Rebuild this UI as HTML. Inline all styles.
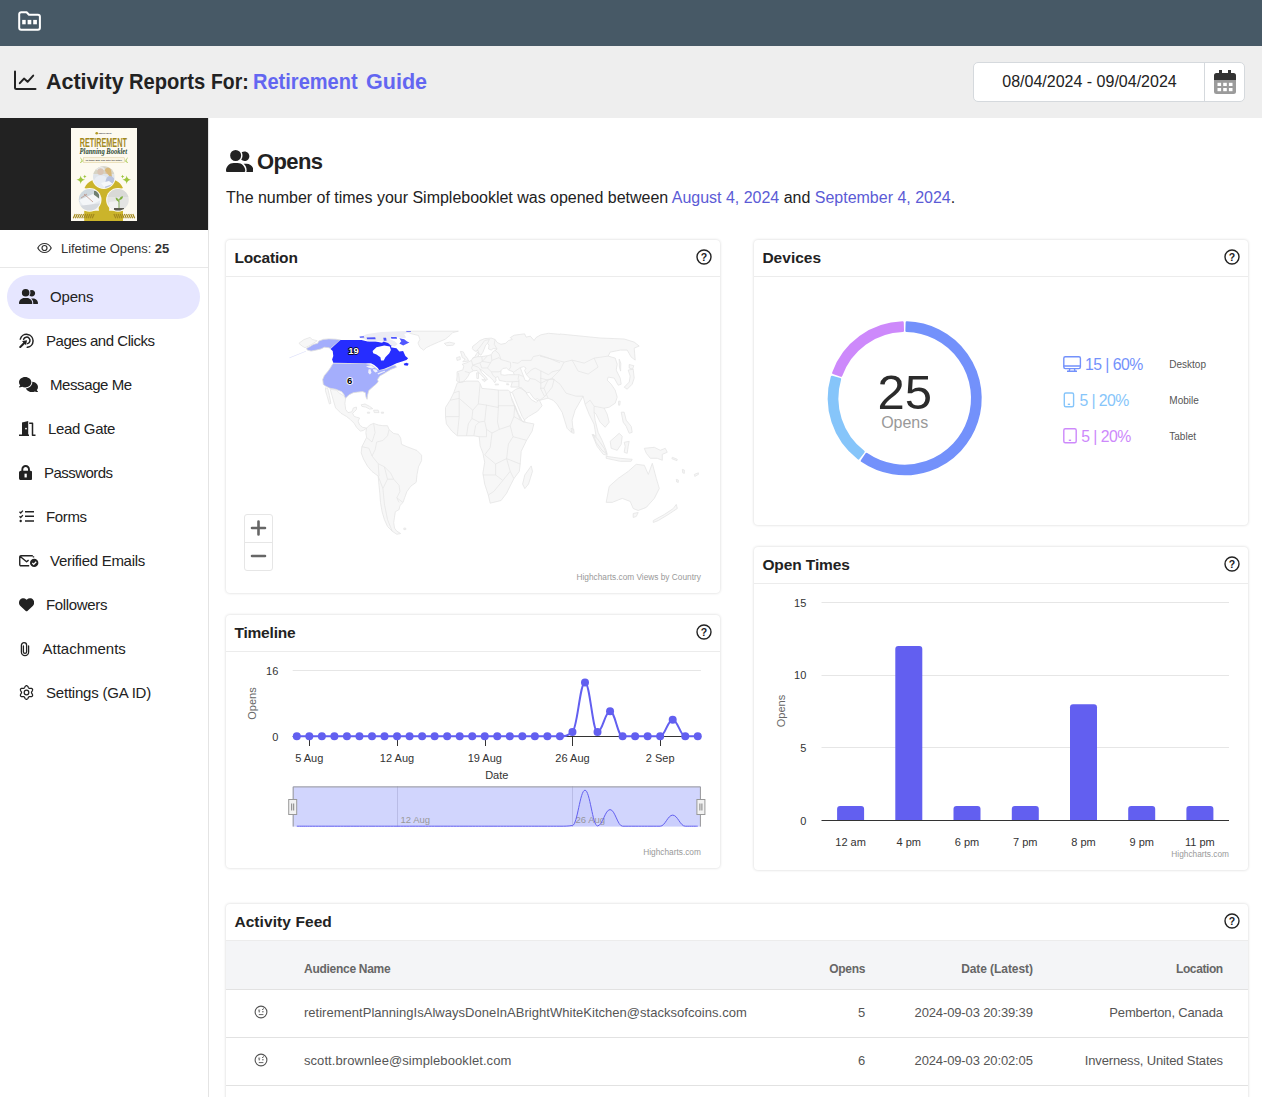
<!DOCTYPE html>
<html><head><meta charset="utf-8"><title>Activity Reports</title>
<style>
*{box-sizing:border-box;margin:0;padding:0}
html,body{width:1262px;height:1097px;overflow:hidden;background:#fff;font-family:"Liberation Sans",sans-serif;color:#222}
.abs{position:absolute}
#top{position:absolute;left:0;top:0;width:1262px;height:46px;background:#475966}
#bar{position:absolute;left:0;top:46px;width:1262px;height:72px;background:#eeeeee}
#title{position:absolute;left:46px;top:68px;font-size:22.500px;font-weight:bold;line-height:28px;letter-spacing:-0.97px;color:#222;white-space:nowrap}
#title i{position:absolute;top:0;font-style:normal;letter-spacing:0}#title i.c{color:#6366f1}
#date{position:absolute;left:973px;top:62px;width:272px;height:40px;border:1px solid #d5d9dd;border-radius:5px;background:#fff}
#date .txt{position:absolute;left:0;top:0;width:231px;height:38px;line-height:38px;text-align:center;font-size:16px;color:#222}
#date .sep{position:absolute;left:230px;top:0;width:1px;height:38px;background:#d5d9dd}
#side{position:absolute;left:0;top:118px;width:209px;height:979px;border-right:1px solid #e4e4e4;background:#fff}
#thumb{position:absolute;left:0;top:0;width:208px;height:112px;background:#222}
#life{position:absolute;left:0;top:112px;width:208px;height:38px;border-bottom:1px solid #e8e8e8;font-size:13px;line-height:38px;letter-spacing:-0.05px;color:#333}
.nav{position:absolute;left:0;width:208px;height:44px;font-size:15px;line-height:44px;color:#222;letter-spacing:-0.3px;white-space:nowrap}
.nav.act{left:7px;width:193px;border-radius:22px;background:#e6e6ff}
.nav svg{position:absolute}
.nav span{position:absolute;top:0}
h1{position:absolute;left:257px;top:148px;font-size:22px;line-height:28px;font-weight:bold;letter-spacing:-0.6px;color:#222}
#desc{position:absolute;left:226px;top:186px;font-size:16px;line-height:24px;color:#222;white-space:nowrap;letter-spacing:-0.012px}
#desc b{font-weight:normal;color:#5b5bd6}
.card{position:absolute;background:#fff;border-radius:4px;box-shadow:0 0 3px rgba(0,0,0,.18)}
.card .hd{position:absolute;left:0;top:0;right:0;height:37px;border-bottom:1px solid #ececec;font-size:15.500px;font-weight:bold;line-height:36px;padding-left:8.400px;color:#222;letter-spacing:-0.2px}
.card .q{position:absolute;right:8.500px;top:8.800px;width:16px;height:16px}

#c-feed .th{position:absolute;left:0;top:37px;width:1022px;height:49px;background:#f4f5f7;border-bottom:1px solid #e2e2e2}
#c-feed .row{position:absolute;left:0;width:1022px;height:48px;border-bottom:1px solid #e2e2e2}
#c-feed .t{position:absolute;white-space:nowrap;font-size:13px;line-height:16px;color:#555}
#c-feed .h{position:absolute;white-space:nowrap;font-size:12px;line-height:16px;color:#666;font-weight:bold}
#c-feed .r{text-align:right}
</style></head><body>
<div id="top"></div>
<div id="bar"></div>
<div id="title"><i id="w1" style="left:0.2px;transform:scaleX(0.9545);transform-origin:0 0">Activity</i><i id="w2" style="left:82.9px;transform:scaleX(0.8953);transform-origin:0 0">Reports</i><i id="w3" style="left:164.7px;transform:scaleX(0.8607);transform-origin:0 0">For:</i><i id="w4" class="c" style="left:207.2px;transform:scaleX(0.8902);transform-origin:0 0">Retirement</i><i id="w5" class="c" style="left:319.7px;transform:scaleX(0.9577);transform-origin:0 0">Guide</i></div>
<div id="date"><div class="txt">08/04/2024 - 09/04/2024</div><div class="sep"></div></div>

<svg class="abs" style="left:18px;top:11px" width="24" height="20" viewBox="0 0 24 20"><path d="M3.200 1.200h5.400l2.400 2.600h8.900a2 2 0 0 1 2 2v10.900a2 2 0 0 1-2 2H3.200a2 2 0 0 1-2-2V3.200a2 2 0 0 1 2-2z" fill="none" stroke="#fff" stroke-width="2" stroke-linejoin="round"/><rect x="4.200" y="8.900" width="3.500" height="4.400" fill="#fff"/><rect x="9.600" y="8.900" width="3.700" height="4.400" fill="#fff"/><rect x="15.200" y="8.900" width="3.700" height="4.400" fill="#fff"/></svg>
<svg class="abs" style="left:13px;top:70px" width="24" height="21" viewBox="0 0 24 21"><path d="M2 1.500V17.500a1.500 1.500 0 0 0 1.500 1.500H22.500" fill="none" stroke="#222" stroke-width="2" stroke-linecap="round"/><path d="M6.800 13.200l4.200-4.600 3.600 3.200 5.600-6.200" fill="none" stroke="#222" stroke-width="2" stroke-linecap="round" stroke-linejoin="round"/></svg>
<svg class="abs" style="left:1213.500px;top:70px" width="22" height="24" viewBox="0 0 22 24"><path d="M5 0h3v3h6V0h3v3h2.500a2.500 2.500 0 0 1 2.500 2.500V10.500H0V5.500A2.500 2.500 0 0 1 2.500 3H5z" fill="#333"/><path d="M0 10.500h22v11a2.500 2.500 0 0 1-2.500 2.500h-17A2.500 2.500 0 0 1 0 21.500z" fill="#9b9b9b"/><g fill="#fff"><rect x="3.500" y="12.800" width="3.600" height="3.200"/><rect x="9.200" y="12.800" width="3.600" height="3.200"/><rect x="14.900" y="12.800" width="3.600" height="3.200"/><rect x="3.500" y="18" width="3.600" height="3.200"/><rect x="9.200" y="18" width="3.600" height="3.200"/><rect x="14.900" y="18" width="3.600" height="3.200"/></g></svg>
<div id="side">
<div id="thumb"></div><svg class="abs" style="left:71px;top:10px" width="66" height="93" viewBox="0 0 66 93">
<defs>
<clipPath id="cp1"><circle cx="32.800" cy="49" r="10.800"/></clipPath>
<clipPath id="cp2"><circle cx="18.600" cy="71.800" r="10.800"/></clipPath>
<clipPath id="cp3"><circle cx="47" cy="71.800" r="10.800"/></clipPath>
</defs>
<rect width="66" height="93" fill="#fdfaf0"/>
<circle cx="25.700" cy="5.200" r="1.300" fill="#b39a22"/>
<text x="27.500" y="6" font-family="Liberation Sans, sans-serif" font-size="2.200" font-weight="bold" fill="#333" textLength="13" lengthAdjust="spacingAndGlyphs">SENIOR HELPS</text>
<text x="8.800" y="19" font-family="Liberation Sans, sans-serif" font-size="12.600" font-weight="bold" fill="#a3891d" textLength="47" lengthAdjust="spacingAndGlyphs">RETIREMENT</text>
<text x="8.600" y="25.500" font-family="Liberation Serif, serif" font-size="8" font-weight="bold" font-style="italic" fill="#2e4a34" textLength="47.500" lengthAdjust="spacingAndGlyphs">Planning Booklet</text>
<rect x="12.300" y="29.800" width="41" height="4.600" fill="#fbf6e4" stroke="#d9c98f" stroke-width=".5"/>
<text x="14.500" y="33" font-family="Liberation Sans, sans-serif" font-size="2.300" font-weight="bold" fill="#444" textLength="36.500" lengthAdjust="spacingAndGlyphs">To those who look after the future</text>
<path d="M9.500 30c1 .8 1.600 1.800 1.400 3.400M9.200 34.500c1.200-.2 2-.8 2.400-1.800" stroke="#9dc43c" stroke-width=".9" fill="none"/>
<path d="M56.500 30c-1 .8-1.600 1.800-1.400 3.400M56.800 34.500c-1.200-.2-2-.8-2.400-1.800" stroke="#9dc43c" stroke-width=".9" fill="none"/>
<path d="M13.200 93V82.800H52V93zM13.500 60C17 53 22 50.500 32.800 50.500S48.500 53 52 60L40 66 38 83H28L26 66z" fill="#cbb42b"/>
<circle cx="32.800" cy="49" r="11.900" fill="#fdfaf0"/>
<circle cx="18.600" cy="71.800" r="11.900" fill="#fdfaf0"/>
<circle cx="47" cy="71.800" r="11.900" fill="#fdfaf0"/>
<g clip-path="url(#cp1)"><rect x="21" y="37" width="24" height="24" fill="#dfe4ea"/><rect x="21" y="37" width="24" height="9" fill="#d7d4c4"/><ellipse cx="29.500" cy="43.500" rx="3.200" ry="3.600" fill="#d9c4b4"/><path d="M25.800 42c.5-3 6.500-3.500 7.400-.3" fill="none" stroke="#e8e8e8" stroke-width="1.600"/><ellipse cx="37" cy="43" rx="2.800" ry="3.300" fill="#e0bfa4"/><path d="M34 42.500c.3-4 6.500-4 6.300 1.500l.7 5h-2z" fill="#d8b878"/><path d="M22 60c0-9 3-12.500 8-12.500s7 3 7 12.500z" fill="#e9edf4"/><path d="M34 60c0-8 1.500-12 5-12s6 4 6 12z" fill="#b9c3de"/><path d="M30 55l8-2 4 3-9 3z" fill="#f6f8fa"/></g>
<g clip-path="url(#cp2)"><rect x="7" y="60" width="24" height="24" fill="#e6eaee"/><path d="M7 60h24v7L7 74z" fill="#cfd8de"/><rect x="23" y="63" width="5" height="10" fill="#6f7f72"/><path d="M8 72l14-6 8 6-16 8z" fill="#f4f6f8"/><path d="M10 70l6-4M13 66l9 8" stroke="#b98a7a" stroke-width=".7"/><path d="M7 78l24-3v9H7z" fill="#d5d9de"/></g>
<g clip-path="url(#cp3)"><rect x="35" y="60" width="24" height="24" fill="#e4e4e2"/><path d="M35 60h24v9H35z" fill="#d9d9d6"/><path d="M36 84l2-10 9-1 1 11z" fill="#f2f2f0"/><path d="M43 80h10v4H43z" fill="#5c5a50"/><path d="M48 80v-9" stroke="#6a9a3a" stroke-width=".8"/><path d="M48 74c-2.500-1-3.500-3-3.300-4.500 2 .3 3.300 2 3.300 4.500zM48 72c.5-2.500 2-3.800 4-3.800 0 2-1.500 3.800-4 3.800z" fill="#7fb03f"/></g>
<path d="M9.70 47.40Q10.22 51.18 14.00 51.70Q10.22 52.22 9.70 56.00Q9.18 52.22 5.40 51.70Q9.18 51.18 9.70 47.40z" fill="#9dc43c"/><path d="M13.80 46.80Q14.02 48.38 15.60 48.60Q14.02 48.82 13.80 50.40Q13.58 48.82 12.00 48.60Q13.58 48.38 13.80 46.80z" fill="#9dc43c"/><path d="M55.70 47.40Q56.22 51.18 60.00 51.70Q56.22 52.22 55.70 56.00Q55.18 52.22 51.40 51.70Q55.18 51.18 55.70 47.40z" fill="#9dc43c"/><path d="M51.60 46.80Q51.82 48.38 53.40 48.60Q51.82 48.82 51.60 50.40Q51.38 48.82 49.80 48.60Q51.38 48.38 51.60 46.80z" fill="#9dc43c"/>
<path d="M2.3 90.300l1.900-4.300M4.4 90.300l1.900-4.300M6.5 90.300l1.900-4.300M8.6 90.300l1.900-4.300M10.7 90.300l1.900-4.300M12.8 90.300l1.900-4.300M14.9 90.300l1.900-4.300M17.0 90.300l1.900-4.300M19.1 90.300l1.900-4.300M21.2 90.300l1.900-4.300M63.7 90.300l-1.900-4.300M61.6 90.300l-1.900-4.300M59.5 90.300l-1.900-4.300M57.4 90.300l-1.900-4.300M55.3 90.300l-1.900-4.300M53.2 90.300l-1.900-4.300M51.1 90.300l-1.900-4.300M49.0 90.300l-1.900-4.300M46.9 90.300l-1.900-4.300M44.8 90.300l-1.900-4.300" fill="none" stroke="#a3891d" stroke-width="1.200"/>
</svg>
<div id="life"><span style="position:absolute;left:61px">Lifetime Opens: <b>25</b></span></div>
<svg class="abs" style="left:37px;top:124px" width="15" height="12" viewBox="0 0 15 12"><path d="M.8 6C2.300 3 4.700 1.500 7.500 1.500S12.700 3 14.200 6C12.700 9 10.300 10.500 7.500 10.500S2.300 9 .8 6z" fill="none" stroke="#333" stroke-width="1.200"/><circle cx="7.500" cy="6" r="2.500" fill="none" stroke="#333" stroke-width="1.200"/></svg>
<div class="nav act" style="top:157px"><svg style="left:12px;top:14px" width="19" height="15.2" viewBox="0 0 640 512"><path fill="#222" d="M96 128a128 128 0 1 1 256 0A128 128 0 1 1 96 128zM0 482.300C0 383.800 79.800 304 178.300 304h91.400C368.200 304 448 383.800 448 482.300c0 16.400-13.300 29.700-29.700 29.700H29.700C13.300 512 0 498.700 0 482.300zM609.300 512H471.400c5.400-9.400 8.600-20.300 8.600-32v-8c0-60.700-27.100-115.200-69.800-151.800c2.400-.1 4.700-.2 7.100-.2h61.400C567.800 320 640 392.200 640 481.300c0 17-13.800 30.700-30.700 30.700zM432 256c-31 0-59-12.600-79.300-32.900C372.400 196.500 384 163.600 384 128c0-26.800-6.600-52.100-18.300-74.300C384.300 40.100 407.200 32 432 32c61.900 0 112 50.100 112 112s-50.100 112-112 112z"/></svg><span style="left:43px;letter-spacing:-0.18px">Opens</span></div>
<div class="nav" style="top:201px"><svg style="left:19px;top:13.500px" width="15" height="15.500" viewBox="0 0 15 15.500"><g fill="none" stroke="#222" stroke-width="1.500" stroke-linecap="round"><path d="M1.300 6.100A6.500 6.500 0 1 1 8.300 14.300"/><path d="M4.600 6.300A3.300 3.300 0 1 1 8.600 10.600"/></g><path fill="#222" d="M8 7.300L3 8.100l1.300 1.300L0.400 13.600a.7.700 0 0 0 0 1l.3.300a.7.700 0 0 0 1 0L5.800 10.900l1.300 1.300z"/></svg><span style="left:46px;letter-spacing:-0.46px">Pages and Clicks</span></div>
<div class="nav" style="top:245px"><svg style="left:19px;top:13.8px" width="19" height="15.2" viewBox="0 0 640 512"><path fill="#222" d="M208 352c114.900 0 208-78.800 208-176S322.900 0 208 0S0 78.800 0 176c0 38.600 14.700 74.300 39.600 103.400c-3.500 9.400-8.700 17.700-14.200 24.700c-4.800 6.200-9.700 11-13.300 14.300c-1.800 1.600-3.300 2.900-4.300 3.700c-.5 .4-.9 .7-1.100 .8l-.2 .2C1 327.200-1.400 334.400 .8 340.900S9.100 352 16 352c21.800 0 43.800-5.600 62.100-12.500c9.200-3.500 17.800-7.400 25.300-11.400C134.100 343.300 169.800 352 208 352zM448 176c0 112.300-99.100 196.900-216.500 207C255.800 457.400 336.400 512 432 512c38.200 0 73.900-8.700 104.700-23.900c7.500 4 16 7.900 25.200 11.400c18.300 6.900 40.300 12.500 62.100 12.500c6.900 0 13.100-4.500 15.200-11.100c2.100-6.600-.2-13.800-5.800-17.900l-.2-.2c-.2-.2-.6-.4-1.100-.8c-1-.8-2.500-2-4.300-3.700c-3.600-3.300-8.500-8.100-13.300-14.300c-5.500-7-10.700-15.400-14.200-24.700c24.900-29 39.600-64.700 39.600-103.400c0-92.800-84.900-168.900-192.600-175.500c.4 5.100 .6 10.300 .6 15.500z"/></svg><span style="left:50px;letter-spacing:-0.41px">Message Me</span></div>
<div class="nav" style="top:289px"><svg style="left:19px;top:14px" width="17" height="15" viewBox="0 0 17 15"><path fill="#222" d="M3 1.400L9.200 0v13.500H10v1.500H0v-1.500h3z"/><circle cx="7" cy="7.600" r=".9" fill="#fff"/><path d="M10.200 2.200h3.300v12h3" fill="none" stroke="#222" stroke-width="1.500" stroke-linejoin="round"/></svg><span style="left:48px;letter-spacing:-0.34px">Lead Gate</span></div>
<div class="nav" style="top:333px"><svg style="left:19px;top:14px" width="13.3" height="15.2" viewBox="0 0 448 512"><path fill="#222" d="M144 144v48H304V144c0-44.200-35.800-80-80-80s-80 35.800-80 80zM80 192V144C80 64.500 144.500 0 224 0s144 64.500 144 144v48h16c35.300 0 64 28.700 64 64V448c0 35.300-28.700 64-64 64H64c-35.300 0-64-28.700-64-64V256c0-35.300 28.700-64 64-64H80z"/><rect x="186" y="292" width="76" height="128" fill="#fff"/></svg><span style="left:44px;letter-spacing:-0.53px">Passwords</span></div>
<div class="nav" style="top:377px"><svg style="left:19px;top:15px" width="15" height="13" viewBox="0 0 15 13"><g fill="none" stroke="#222" stroke-width="1.500"><path d="M6 1.800h9M6 6.300h9M6 10.900h9"/><path d="M0.500 1.800l1.200 1.200 2.200-2.400M0.500 6.300l1.200 1.200 2.200-2.400" stroke-width="1.300"/></g><circle cx="1.700" cy="11" r="1.200" fill="#222"/></svg><span style="left:46px;letter-spacing:-0.36px">Forms</span></div>
<div class="nav" style="top:421px"><svg style="left:19px;top:16px" width="19.500" height="12.500" viewBox="0 0 19.500 12.500"><path d="M13.800 0.750H2a1.250 1.250 0 0 0-1.250 1.250v7.500a1.250 1.250 0 0 0 1.250 1.250h8.200M.9 1.300l6.700 5.400 2-1.600M14.500 1.300v1.200" fill="none" stroke="#222" stroke-width="1.400" stroke-linejoin="round"/><circle cx="15.200" cy="7.900" r="4.200" fill="#222"/><path d="M13.300 8l1.400 1.400 2.500-2.700" fill="none" stroke="#fff" stroke-width="1.300"/></svg><span style="left:50px;letter-spacing:-0.28px">Verified Emails</span></div>
<div class="nav" style="top:465px"><svg style="left:19px;top:13.6px" width="15.2" height="15.2" viewBox="0 0 512 512"><path fill="#222" d="M47.600 300.400L228.300 469.100c7.500 7 17.400 10.900 27.700 10.900s20.200-3.900 27.700-10.900L464.400 300.400c30.400-28.300 47.600-68 47.600-109.500v-5.800c0-69.900-50.500-129.500-119.400-141C347 36.500 300.600 51.400 268 84L256 96 244 84c-32.600-32.600-79-47.500-124.600-39.900C50.500 55.600 0 115.200 0 185.100v5.800c0 41.500 17.200 81.200 47.600 109.500z"/></svg><span style="left:46px;letter-spacing:-0.35px">Followers</span></div>
<div class="nav" style="top:509px"><svg style="left:19.500px;top:13.500px" width="10" height="16" viewBox="0 0 10 16"><path d="M8.600 5v6a3.600 3.600 0 0 1-7.200 0V4.300a2.600 2.600 0 0 1 5.200 0V10.800a1.600 1.600 0 0 1-3.200 0V5" fill="none" stroke="#222" stroke-width="1.300" stroke-linecap="round"/></svg><span style="left:42.500px;letter-spacing:0.0px">Attachments</span></div>
<div class="nav" style="top:553px"><svg style="left:19px;top:14.200px" width="15" height="15" viewBox="0 0 15 15"><path d="M7.50 0.65L7.86 0.71L8.20 0.87L8.51 1.12L8.79 1.44L9.03 1.80L9.23 2.17L9.41 2.51L9.59 2.81L9.77 3.05L9.97 3.21L10.22 3.31L10.52 3.35L10.86 3.35L11.25 3.33L11.67 3.33L12.10 3.36L12.52 3.44L12.89 3.58L13.21 3.79L13.43 4.07L13.56 4.41L13.59 4.79L13.53 5.19L13.39 5.59L13.20 5.97L12.98 6.33L12.78 6.66L12.60 6.96L12.49 7.24L12.45 7.50L12.49 7.76L12.60 8.04L12.78 8.34L12.98 8.67L13.20 9.03L13.39 9.41L13.53 9.81L13.59 10.21L13.56 10.59L13.43 10.92L13.21 11.21L12.89 11.42L12.52 11.56L12.10 11.64L11.67 11.67L11.25 11.67L10.86 11.65L10.52 11.65L10.22 11.69L9.97 11.79L9.77 11.95L9.59 12.19L9.41 12.49L9.23 12.83L9.03 13.20L8.79 13.56L8.51 13.88L8.20 14.13L7.86 14.29L7.50 14.35L7.14 14.29L6.80 14.13L6.49 13.88L6.21 13.56L5.97 13.20L5.77 12.83L5.59 12.49L5.41 12.19L5.23 11.95L5.03 11.79L4.78 11.69L4.48 11.65L4.14 11.65L3.75 11.67L3.33 11.67L2.90 11.64L2.48 11.56L2.11 11.42L1.79 11.21L1.57 10.93L1.44 10.59L1.41 10.21L1.47 9.81L1.61 9.41L1.80 9.03L2.02 8.67L2.22 8.34L2.40 8.04L2.51 7.76L2.55 7.50L2.51 7.24L2.40 6.96L2.22 6.66L2.02 6.33L1.80 5.97L1.61 5.59L1.47 5.19L1.41 4.79L1.44 4.41L1.57 4.07L1.79 3.79L2.11 3.58L2.48 3.44L2.90 3.36L3.33 3.33L3.75 3.33L4.14 3.35L4.48 3.35L4.78 3.31L5.03 3.21L5.23 3.05L5.41 2.81L5.59 2.51L5.77 2.17L5.97 1.80L6.21 1.44L6.49 1.12L6.80 0.87L7.14 0.71L7.50 0.65z" fill="none" stroke="#222" stroke-width="1.250" stroke-linejoin="round"/><circle cx="7.500" cy="7.500" r="2.300" fill="none" stroke="#222" stroke-width="1.250"/></svg><span style="left:46px;letter-spacing:-0.21px">Settings (GA ID)</span></div>
</div>
<svg class="abs" style="left:225.500px;top:150px" width="27.5" height="22" viewBox="0 0 640 512"><path fill="#222" d="M96 128a128 128 0 1 1 256 0A128 128 0 1 1 96 128zM0 482.300C0 383.800 79.800 304 178.300 304h91.400C368.200 304 448 383.800 448 482.300c0 16.400-13.300 29.700-29.700 29.700H29.700C13.300 512 0 498.700 0 482.300zM609.300 512H471.400c5.400-9.400 8.600-20.300 8.600-32v-8c0-60.700-27.100-115.200-69.800-151.800c2.400-.1 4.700-.2 7.100-.2h61.400C567.800 320 640 392.200 640 481.300c0 17-13.800 30.700-30.700 30.700zM432 256c-31 0-59-12.600-79.300-32.900C372.400 196.500 384 163.600 384 128c0-26.800-6.600-52.100-18.300-74.300C384.300 40.100 407.200 32 432 32c61.900 0 112 50.100 112 112s-50.100 112-112 112z"/></svg>
<h1>Opens</h1>
<div id="desc">The number of times your Simplebooklet was opened between <b>August 4, 2024</b> and <b>September 4, 2024</b>.</div>
<div class="card" id="c-loc" style="left:226px;top:240px;width:494px;height:353px"><div class="hd" style="letter-spacing:-0.16px">Location</div><svg class="q" viewBox="0 0 16 16"><circle cx="8" cy="8" r="7" fill="none" stroke="#222" stroke-width="1.400"/><text x="8" y="11.600" text-anchor="middle" font-family="Liberation Sans, sans-serif" font-size="10.500" font-weight="bold" fill="#222">?</text></svg><svg id="mapsvg" class="abs" style="left:0;top:37px" width="494" height="316" viewBox="226 277 494 316" font-family="Liberation Sans, sans-serif">
<g fill="#f7f7f7" stroke="#e4e4e4" stroke-width=".8" stroke-linejoin="round">
<path d="M406.1 331.2L410.9 333.6L418.5 335.5L419.9 339.3L418.0 343.1L419.9 347.3L423.7 350.2L426.1 347.8L430.8 345.4L438.4 342.1L445.1 339.3L449.8 335.5L452.7 332.6L458.4 331.2zM298.9 343.3L303.9 339.6L310.0 337.4L312.2 339.4L317.2 340.8L313.3 343.3L309.1 345.9L305.0 347.7L302.2 346.1zM330.2 389.3L333.3 400.2L335.6 407.9L341.0 413.3L346.4 416.4L350.3 419.5L354.2 423.4L356.5 427.3L360.4 431.2L363.5 430.4L366.6 428.1L362.7 427.3L359.6 425.0L358.1 421.1L359.6 418.0L356.5 417.2L354.2 416.4L352.6 413.3L356.5 409.5L356.5 407.1L353.4 407.9L351.9 411.8L348.0 412.6L345.7 409.5L344.9 403.3L345.7 397.8L343.3 395.5L339.5 393.2L336.4 390.1zM325.5 387.8L327.8 388.5L329.4 395.5L330.9 403.3L329.4 404.0L327.4 397.1L325.5 390.9zM361.2 404.8L365.0 404.0L369.7 406.4L372.8 408.7L369.7 409.1L365.8 407.1L361.9 406.4zM373.6 410.2L378.2 410.2L379.0 412.6L374.3 412.6zM381.3 412.2L383.6 412.2L383.6 413.2L381.3 413.2zM367.4 412.2L369.7 412.2L369.7 413.2L367.4 413.2zM366.6 428.1L369.7 425.0L373.6 423.4L378.2 425.0L382.9 425.7L387.5 425.7L389.1 429.6L393.7 433.5L398.4 434.3L400.7 438.1L401.5 444.3L406.9 446.7L417.0 450.5L421.6 455.2L421.6 460.6L418.5 466.8L417.0 474.6L416.2 482.3L410.8 486.2L406.9 491.6L404.6 497.8L403.0 502.5L399.9 505.6L399.1 509.5L395.3 511.8L394.5 517.2L393.7 522.6L394.5 528.1L396.8 531.2L400.7 533.5L396.8 534.3L392.2 531.2L387.5 526.5L384.4 519.5L382.1 511.8L380.5 502.5L379.8 493.2L379.0 485.4L378.2 476.1L372.0 471.5L367.4 466.0L363.5 459.1L361.2 452.9L361.9 446.7L364.3 442.0L366.6 437.4L365.8 432.7zM403.8 528.1L405.8 528.1L405.8 529.6L403.8 529.6zM457.3 382.9L466.5 381.1L478.3 381.1L480.1 383.8L482.0 388.4L492.0 389.3L499.3 390.2L508.4 390.2L511.1 392.9L512.0 400.2L516.6 411.2L520.2 419.4L523.9 422.1L533.9 423.9L532.1 431.2L526.6 440.3L521.2 451.3L520.2 464.0L519.3 471.3L513.9 478.6L510.2 485.9L506.6 493.2L501.1 500.5L490.2 503.2L488.3 495.0L484.7 484.1L482.9 473.1L484.7 462.2L482.9 453.1L480.1 445.8L479.2 436.7L473.8 435.8L466.5 435.8L457.3 435.8L451.9 431.2L446.4 423.9L445.5 416.6L445.5 407.5L450.1 400.2L453.7 392.9zM524.8 475.0L531.2 465.9L532.5 471.3L528.5 484.1L524.8 488.6L522.6 484.1zM511.1 392.9L515.7 389.3L521.2 387.5L526.6 392.9L531.2 398.4L535.7 401.1L539.4 400.2L542.1 405.7L537.6 411.2L528.5 416.6L523.9 420.3L520.2 418.5L516.6 410.2L513.0 400.2zM460.4 351.4L463.3 351.9L465.2 355.7L467.6 358.5L468.5 360.9L462.8 361.9L465.2 359.0L462.3 357.6L461.4 354.2zM456.6 357.6L460.0 356.6L460.4 359.5L457.1 360.4zM444.3 343.3L449.5 342.2L454.7 343.3L453.3 345.2L446.7 345.7zM476.6 372.8L478.5 372.8L478.5 378.5L476.9 378.5zM481.8 379.4L485.6 379.9L484.7 381.8zM495.1 384.2L498.5 384.0L498.5 384.8L495.1 384.9zM506.6 383.7L508.9 384.0L508.7 384.8L506.6 384.6zM457.1 371.8L462.8 369.9L463.8 366.1L462.3 364.2L466.6 362.8L471.4 360.4L472.8 358.0L474.2 357.6L476.6 353.8L477.6 351.9L479.0 354.2L478.0 356.6L481.8 356.6L487.5 355.7L491.3 354.7L492.8 351.9L495.1 350.4L497.1 349.0L493.2 348.5L491.3 350.0L488.5 349.0L489.0 345.2L487.5 343.3L485.6 345.2L484.2 349.0L482.8 352.3L480.9 355.2L479.0 353.8L478.0 350.4L476.1 351.4L473.8 350.4L472.3 348.5L472.8 346.2L476.1 343.8L479.9 340.5L484.7 338.6L491.3 338.1L495.1 339.5L497.1 342.4L500.9 344.3L505.6 343.3L508.5 340.5L512.3 339.5L510.4 337.6L514.2 335.2L524.6 333.8L526.1 337.1L530.3 336.2L534.1 340.5L536.0 337.6L540.8 334.8L548.4 333.3L560.0 334.3L560.0 334.0L580.1 336.0L600.1 338.0L624.2 339.0L634.2 342.1L639.2 346.1L634.2 348.1L635.2 360.1L631.2 357.1L627.2 350.1L620.2 350.1L610.2 352.1L608.2 356.1L615.2 358.1L617.2 364.1L616.2 370.1L620.2 378.1L621.2 384.2L618.2 385.2L614.2 378.1L608.2 377.1L607.2 380.1L611.2 384.2L615.2 390.2L617.2 397.2L615.2 403.2L609.2 407.2L604.2 408.2L607.2 414.2L609.2 422.2L605.2 427.3L600.1 422.2L596.1 414.2L594.1 412.2L595.1 420.2L598.1 432.3L602.1 440.3L606.2 450.3L607.2 454.3L602.1 450.3L596.1 442.3L593.1 434.3L596.1 436.3L594.1 424.3L589.1 414.2L585.1 404.2L583.1 396.2L579.1 403.2L575.1 410.2L572.1 420.2L573.1 430.3L571.1 432.3L567.1 428.3L562.1 412.2L557.0 404.2L553.0 400.2L548.0 398.2L540.0 400.2L540.0 400.2L537.0 398.5L534.1 401.3L531.3 398.5L528.4 394.7L526.1 391.8L518.9 387.1L510.8 387.1L512.3 381.8L506.6 381.8L499.4 380.4L498.0 376.6L495.6 377.5L496.1 380.4L494.7 382.8L493.2 380.4L489.4 376.6L485.6 373.7L482.8 370.9L479.9 369.0L481.8 372.8L485.6 376.6L487.5 379.4L485.6 380.4L483.7 377.5L480.9 374.7L478.0 371.8L477.1 370.4L473.3 370.9L469.5 372.8L468.5 375.6L465.7 379.4L462.8 381.8L459.5 382.3L456.6 380.9L457.1 376.6zM628.2 370.1L633.2 369.1L634.2 378.1L632.2 384.2L627.2 389.2L624.2 387.2L629.2 382.1L630.2 376.1zM629.2 364.5L633.8 365.7L632.6 369.1L629.2 368.1zM619.2 359.1L620.8 363.1L620.6 371.1L619.4 367.1zM618.6 401.2L620.2 401.2L619.8 405.2L618.6 405.2zM621.2 412.2L624.2 412.2L626.2 420.2L631.2 426.3L632.2 432.3L629.2 433.3L626.2 426.3L623.2 422.2zM610.2 441.3L619.2 433.3L622.2 436.3L621.2 444.3L617.2 450.3L611.2 448.3zM592.1 434.3L597.1 438.3L604.2 448.3L607.2 455.3L603.2 454.3L597.1 446.3zM606.2 456.3L620.2 458.3L632.2 459.3L631.2 461.3L620.2 461.3L606.2 458.3zM624.2 442.3L629.2 441.3L628.2 446.3L627.2 453.3L624.2 452.3L625.2 446.3zM644.3 448.3L654.3 447.3L660.3 450.3L665.3 448.3L667.3 452.3L662.3 454.3L662.3 460.3L657.3 458.3L650.3 458.3L646.3 453.3zM606.2 502.4L609.2 486.4L618.2 478.4L628.2 471.4L636.2 464.3L644.3 465.3L648.3 474.4L652.3 463.3L656.3 478.4L659.3 488.4L654.3 498.4L646.3 507.4L638.2 510.5L633.2 508.5L630.2 501.4L622.2 498.4L612.2 502.4zM633.2 513.5L638.2 512.5L636.2 516.5L633.2 517.5zM653.3 520.5L664.3 514.5L673.3 508.5L676.3 504.4L677.3 508.5L668.3 514.5L658.3 520.5L653.3 522.5zM571.1 428.3L573.7 429.3L574.1 433.3L571.7 432.7zM672.3 457.3L677.3 459.3L676.9 460.7L671.9 458.7zM682.3 469.4L684.3 470.0L684.3 473.4L682.7 472.8zM694.4 474.4L698.4 472.8L698.4 474.4L694.8 476.4zM676.3 479.4L678.3 480.0L678.3 482.4L676.7 482.0z"/>
<path fill="#fff" d="M500.9 370.9L502.8 368.5L506.6 368.0L508.5 369.9L513.2 371.8L514.2 374.7L508.5 374.7L504.7 375.2L500.9 374.7zM520.3 367.6L523.7 366.6L526.1 368.0L524.6 370.4L526.5 374.7L529.9 378.5L528.4 381.3L525.1 380.4L523.7 376.6L521.8 371.8zM509.9 392.2L512.4 392.6L517.5 405.3L522.1 416.3L525.2 421.4L522.6 421.4L518.4 413.9L514.2 403.9L511.1 396.6zM526.3 393.3L529.4 392.2L533.9 398.4L537.9 400.9L536.1 402.4L531.2 399.5z"/>
<path fill="none" stroke-width=".7" d="M389.1 429.6L387.5 435.8L382.9 440.5L376.7 442.0L375.1 449.8L372.0 456.0L378.2 463.7L384.4 466.8L390.6 473.0L393.7 479.2L399.1 485.4L399.9 491.6L396.8 497.8L403.0 502.5M378.2 476.1L382.9 488.5L384.4 504.0L387.5 519.5L392.2 531.2M373.6 423.4L375.1 432.7L372.0 442.0L366.6 437.4M378.2 463.7L379.0 476.1M384.4 466.8L387.5 479.2L393.7 479.2M361.9 446.7L368.9 448.2L372.0 456.0M387.5 479.2L382.9 488.5M396.8 497.8L399.1 502.5M453.7 392.9L459.2 391.1L459.2 398.4L450.1 400.2M459.2 398.4L472.8 410.2L478.3 403.9L480.1 383.8M478.3 403.9L484.7 404.8L498.4 407.5L498.4 390.2M498.4 407.5L498.4 405.7L514.8 405.7L516.6 411.2M472.8 410.2L471.9 418.5L479.2 422.1L484.7 421.2L486.5 404.8M484.7 421.2L486.5 429.4L492.0 433.0L499.3 429.4L497.5 422.1L498.4 407.5M499.3 429.4L510.2 425.7L513.9 416.6L514.8 405.7M513.9 416.6L523.9 422.1M510.2 425.7L513.0 436.7L526.6 440.3M513.0 436.7L508.4 444.0L506.6 458.6L520.2 464.0M492.0 433.0L490.2 447.6L484.7 454.9L495.6 464.0L506.6 458.6M479.2 436.7L486.5 436.7L486.5 429.4M495.6 464.0L495.6 475.0L482.9 475.0M495.6 475.0L502.9 480.4L510.2 471.3L506.6 458.6M502.9 480.4L493.8 491.4L488.3 495.0M510.2 471.3L513.9 478.6M445.5 416.6L459.2 416.6L459.2 398.4M459.2 416.6L457.3 435.8M466.5 435.8L468.3 423.9L471.9 418.5M473.8 435.8L475.6 425.7L479.2 422.1M464.7 371.4L469.5 372.8M459.5 382.3L458.5 372.8M471.4 360.4L472.8 365.2L471.4 368.0L473.3 370.9M481.8 356.6L482.3 361.4L479.9 362.8L472.8 365.2M491.3 354.7L491.8 360.4L490.4 362.8L482.3 361.4M491.8 360.4L499.0 357.6L500.9 359.5L510.4 362.3L510.8 367.1L508.5 369.9M500.9 359.5L499.0 353.8L495.1 350.4M479.9 362.8L481.8 368.0L487.5 368.0L490.4 362.8M487.5 368.0L491.3 371.8L499.0 371.8L500.9 370.9M491.3 371.8L493.2 375.6L495.6 377.5M472.8 365.2L478.0 367.1L479.9 369.0M476.1 351.4L479.9 347.1L484.7 340.5L489.4 339.5M487.5 343.3L489.4 339.5M497.1 349.0L494.2 344.3L495.1 339.5M518.0 379.4L518.9 374.7L514.2 374.7M514.2 371.8L520.3 367.6M518.9 374.7L523.7 376.6M518.9 387.1L518.9 379.4M512.3 381.8L518.9 381.3M512.3 362.3L518.0 363.3L521.8 360.4L531.3 360.4L533.2 356.6L539.8 355.2L547.4 357.6L554.1 360.4L560.0 362.8M526.5 374.7L531.3 369.9L535.1 368.0L540.8 370.9L548.4 374.7L552.2 371.8L560.0 369.9M529.9 378.5L535.1 379.4L540.8 383.2L540.8 389.0L544.6 396.6L540.0 400.2M540.8 383.2L548.4 379.4L554.1 379.4L552.2 387.1L544.6 396.6M540.8 370.9L540.8 383.2M472.8 358.0L478.0 356.6M482.3 361.4L487.5 355.7M540.0 356.1L552.0 359.1L564.1 362.1L572.1 360.1L584.1 363.1L594.1 358.1L608.2 356.1M564.1 362.1L560.0 370.1L552.0 378.1L548.0 380.1L540.0 378.1M572.1 360.1L578.1 371.1L588.1 374.1L598.1 367.1L594.1 358.1M552.0 378.1L560.0 384.2L566.1 393.2L576.1 396.2L583.1 396.2M548.0 380.1L544.0 388.2L548.0 398.2M585.1 404.2L590.1 400.2L594.1 406.2L594.1 412.2M594.1 406.2L604.2 408.2M540.0 388.2L544.0 388.2"/>
</g>
<path fill="#a4aefc" stroke="#dcdcdc" stroke-width=".8" d="M333.3 363.3L365.4 363.6L372.1 365.5L377.6 369.4L379.8 369.9L386.5 368.8L392.0 366.0L395.4 365.5L396.5 367.2L390.9 369.4L386.5 372.1L383.7 373.8L379.8 376.0L377.6 379.4L378.2 381.6L376.5 383.8L373.2 386.6L368.8 390.5L367.6 394.9L367.1 399.3L366.0 397.1L365.4 392.7L362.6 391.6L357.7 392.1L353.2 392.7L348.8 394.9L345.5 398.2L343.8 394.3L341.6 391.6L338.8 390.5L336.0 389.3L329.9 388.2L325.5 386.0L323.3 384.4L322.7 379.4L324.4 375.5L327.7 371.6L330.5 367.7L332.1 364.9zM340.5 340.0L330.5 348.5L328.8 347.7L324.4 347.2L321.0 348.9L316.6 350.0L311.1 351.1L307.2 350.0L306.6 348.3L310.0 346.6L313.3 344.4L317.7 343.3L318.8 341.1L323.3 339.4L328.8 338.9L335.5 339.2z"/>
<path fill="#dfe2fa" d="M306.1 351.6L300.0 354.1L294.4 356.3L289.4 358.3L289.4 357.6L294.4 355.5L300.0 353.3L305.7 351.0z"/>
<path fill="#f1f2fb" d="M366.0 366.3L371.0 365.2L374.5 367.7L372.1 368.5L368.8 367.8zM368.5 369.6L370.4 368.9L371.5 372.7L369.9 374.6L368.2 372.7zM373.0 368.9L376.5 369.4L377.8 371.6L375.4 372.4L373.4 370.7zM377.4 373.6L381.5 371.8L384.8 370.7L385.2 371.6L381.5 372.9L378.2 374.5z"/>
<path fill="#262dff" d="M340.5 340.0L361.5 340.0L367.6 341.6L375.4 341.6L382.1 342.8L384.3 340.8L389.3 341.6L392.0 344.4L390.9 347.2L393.2 347.7L396.5 348.3L399.3 351.6L403.1 351.1L405.4 356.1L408.1 358.3L406.5 359.9L402.0 361.6L396.5 363.3L390.9 366.0L384.3 368.8L379.3 369.9L377.6 367.7L374.3 364.9L371.0 363.3L365.4 363.3L333.3 362.7L332.1 359.4L333.3 356.1L332.7 351.1L330.5 348.9zM403.7 363.8L406.5 362.7L408.7 363.8L407.6 365.8L404.3 365.2z"/>
<path fill="#fff" d="M372.6 351.1L376.5 347.2L384.3 345.5L389.8 346.6L390.9 350.0L389.3 353.3L385.4 357.2L383.7 360.5L381.0 360.5L380.4 357.2L376.5 354.4L373.2 353.3z"/>
<path fill="#ececf4" d="M359.0 337.4L367.1 334.0L381.4 332.1L406.1 330.9L410.9 331.8L404.2 334.0L406.1 337.4L403.2 338.3L399.4 337.4L392.8 336.4L389.9 339.3L394.7 341.2L397.5 344.0L394.7 346.4L390.9 345.4L388.0 343.1L383.3 341.6L381.4 341.2L369.0 341.2L364.3 339.3z"/>
<path fill="#262dff" fill-opacity=".8" d="M359.5 336.4L363.8 336.2L364.3 337.6L360.0 337.8zM366.6 337.4L375.2 337.2L375.7 339.3L367.1 339.3zM383.3 337.8L386.1 337.8L386.6 340.7L383.8 340.7zM390.9 336.9L396.6 336.9L397.1 338.8L391.4 338.8zM399.4 338.3L404.2 339.3L407.1 341.6L409.4 342.6L403.2 345.4L399.4 343.5L401.3 341.2zM406.1 330.9L410.9 330.9L410.9 331.8L406.6 331.8z"/>
<g font-size="9.500" font-weight="bold" paint-order="stroke" stroke-linejoin="round" text-anchor="middle"><text x="353.600" y="354.200" fill="#fff" stroke="#000" stroke-width="1.500">19</text><text x="349.700" y="383.600" fill="#000" stroke="#fff" stroke-width="1.800">6</text></g>
<rect x="244.500" y="514.500" width="28" height="56" rx="2.500" fill="#fff" stroke="#e6e6e6"/><path d="M244.500 542.500h28" stroke="#e6e6e6"/>
<path d="M252 528h13M258.500 521.500v13M252 556h13" stroke="#666" stroke-width="2.600" stroke-linecap="round" fill="none"/>
<text x="700.900" y="580" text-anchor="end" font-size="8.300" fill="#999">Highcharts.com Views by Country</text>
</svg></div>
<div class="card" id="c-dev" style="left:754px;top:240px;width:494px;height:285px"><div class="hd" style="letter-spacing:0.02px">Devices</div><svg class="q" viewBox="0 0 16 16"><circle cx="8" cy="8" r="7" fill="none" stroke="#222" stroke-width="1.400"/><text x="8" y="11.600" text-anchor="middle" font-family="Liberation Sans, sans-serif" font-size="10.500" font-weight="bold" fill="#222">?</text></svg><svg class="abs" style="left:0;top:37px" width="494" height="248" viewBox="0 37 494 248">
<path d="M152.82 82.53A75.8 75.8 0 1 1 107.87 220.84L112.56 213.99A67.5 67.5 0 1 0 152.58 90.83z" fill="#7391fb" stroke="#7391fb" stroke-width="2.4" stroke-linejoin="round"/><path d="M104.45 218.36A75.8 75.8 0 0 1 77.98 136.90L85.95 139.24A67.5 67.5 0 0 0 109.52 211.78z" fill="#86c5fa" stroke="#86c5fa" stroke-width="2.4" stroke-linejoin="round"/><path d="M79.29 132.87A75.8 75.8 0 0 1 148.58 82.53L148.82 90.83A67.5 67.5 0 0 0 87.11 135.66z" fill="#cd89fb" stroke="#cd89fb" stroke-width="2.4" stroke-linejoin="round"/>
<text x="150.7" y="169.3" text-anchor="middle" font-family="Liberation Sans, sans-serif" font-size="49" fill="#2b2b2b">25</text>
<text x="150.7" y="187.8" text-anchor="middle" font-family="Liberation Sans, sans-serif" font-size="16" fill="#999">Opens</text>
<g fill="none" stroke="#7391fb" stroke-width="1.400"><rect x="309.8" y="116.8" width="16.600" height="11.800" rx="1.500"/><path d="M309.8 126.0h16.600M315.8 128.6l-.6 2.500M320.4 128.6l.6 2.500M313.0 131.2h10"/></g>
<g fill="none" stroke="#86c5fa" stroke-width="1.400"><rect x="310.3" y="153.0" width="9.300" height="13.700" rx="1.500"/><path d="M313.8 164.3h2.300"/></g>
<g fill="none" stroke="#cd89fb" stroke-width="1.400"><rect x="309.8" y="188.8" width="12.400" height="13.900" rx="1.500"/><path d="M314.8 200.3h2.300"/></g>
<g font-family="Liberation Sans, sans-serif" font-size="15.800" letter-spacing="-0.55">
<text x="331.0" y="129.7" fill="#7391fb">15 | 60%</text>
<text x="325.4" y="165.6" fill="#86c5fa">5 | 20%</text>
<text x="327.2" y="201.6" fill="#cd89fb">5 | 20%</text>
</g>
<g font-family="Liberation Sans, sans-serif" font-size="10" fill="#555">
<text x="415.3" y="128.2">Desktop</text>
<text x="415.3" y="164.1">Mobile</text>
<text x="415.3" y="200.0">Tablet</text>
</g>
</svg></div>
<div class="card" id="c-time" style="left:226px;top:615px;width:494px;height:253px"><div class="hd" style="letter-spacing:-0.19px">Timeline</div><svg class="q" viewBox="0 0 16 16"><circle cx="8" cy="8" r="7" fill="none" stroke="#222" stroke-width="1.400"/><text x="8" y="11.600" text-anchor="middle" font-family="Liberation Sans, sans-serif" font-size="10.500" font-weight="bold" fill="#222">?</text></svg><svg id="tlsvg" class="abs" style="left:0;top:37px" width="494" height="216" viewBox="0 37 494 216" font-family="Liberation Sans, sans-serif">
<path d="M66.7 55.5H474.9" stroke="#e6e6e6"/>
<path d="M66.7 121.5H474.9" stroke="#333"/>
<path d="M83.5 121.5v9.500" stroke="#333"/>
<text x="83.3" y="147" text-anchor="middle" font-size="11" fill="#333">5 Aug</text>
<path d="M171.5 121.5v9.500" stroke="#333"/>
<text x="171.0" y="147" text-anchor="middle" font-size="11" fill="#333">12 Aug</text>
<path d="M259.5 121.5v9.500" stroke="#333"/>
<text x="258.8" y="147" text-anchor="middle" font-size="11" fill="#333">19 Aug</text>
<path d="M346.5 121.5v9.500" stroke="#333"/>
<text x="346.5" y="147" text-anchor="middle" font-size="11" fill="#333">26 Aug</text>
<path d="M434.5 121.5v9.500" stroke="#333"/>
<text x="434.2" y="147" text-anchor="middle" font-size="11" fill="#333">2 Sep</text>
<text x="270.8" y="164" text-anchor="middle" font-size="11" fill="#333">Date</text>
<text x="52.3" y="60.3" text-anchor="end" font-size="11" fill="#333">16</text>
<text x="52.3" y="126.4" text-anchor="end" font-size="11" fill="#333">0</text>
<text transform="translate(30.3 88.5) rotate(-90)" text-anchor="middle" font-size="11" fill="#666">Opens</text>
<path d="M70.80 121.20C70.80 121.20 78.32 121.20 83.33 121.20C88.34 121.20 90.85 121.20 95.86 121.20C100.87 121.20 103.38 121.20 108.39 121.20C113.40 121.20 115.91 121.20 120.92 121.20C125.93 121.20 128.44 121.20 133.45 121.20C138.46 121.20 140.97 121.20 145.98 121.20C150.99 121.20 153.50 121.20 158.51 121.20C163.52 121.20 166.03 121.20 171.04 121.20C176.05 121.20 178.56 121.20 183.57 121.20C188.58 121.20 191.09 121.20 196.10 121.20C201.11 121.20 203.62 121.20 208.63 121.20C213.64 121.20 216.15 121.20 221.16 121.20C226.17 121.20 228.68 121.20 233.69 121.20C238.70 121.20 241.21 121.20 246.22 121.20C251.23 121.20 253.74 121.20 258.75 121.20C263.76 121.20 266.27 121.20 271.28 121.20C276.29 121.20 278.80 121.20 283.81 121.20C288.82 121.20 291.33 121.20 296.34 121.20C301.35 121.20 303.86 121.20 308.87 121.20C313.88 121.20 316.39 121.20 321.40 121.20C326.41 121.20 328.92 121.20 333.93 121.20C338.94 121.20 341.45 121.20 346.46 117.06C351.47 112.92 353.98 67.38 358.99 67.38C364.00 67.38 366.51 117.06 371.52 117.06C376.53 117.06 379.04 96.36 384.05 96.36C389.06 96.36 391.57 121.20 396.58 121.20C401.59 121.20 404.10 121.20 409.11 121.20C414.12 121.20 416.63 121.20 421.64 121.20C426.65 121.20 429.16 121.20 434.17 121.20C439.18 121.20 441.69 104.64 446.70 104.64C451.71 104.64 454.22 121.20 459.23 121.20C464.24 121.20 471.76 121.20 471.76 121.20" fill="none" stroke="#625ff0" stroke-width="2" stroke-linejoin="round"/>
<g fill="#625ff0"><circle cx="70.80" cy="121.20" r="4"/><circle cx="83.33" cy="121.20" r="4"/><circle cx="95.86" cy="121.20" r="4"/><circle cx="108.39" cy="121.20" r="4"/><circle cx="120.92" cy="121.20" r="4"/><circle cx="133.45" cy="121.20" r="4"/><circle cx="145.98" cy="121.20" r="4"/><circle cx="158.51" cy="121.20" r="4"/><circle cx="171.04" cy="121.20" r="4"/><circle cx="183.57" cy="121.20" r="4"/><circle cx="196.10" cy="121.20" r="4"/><circle cx="208.63" cy="121.20" r="4"/><circle cx="221.16" cy="121.20" r="4"/><circle cx="233.69" cy="121.20" r="4"/><circle cx="246.22" cy="121.20" r="4"/><circle cx="258.75" cy="121.20" r="4"/><circle cx="271.28" cy="121.20" r="4"/><circle cx="283.81" cy="121.20" r="4"/><circle cx="296.34" cy="121.20" r="4"/><circle cx="308.87" cy="121.20" r="4"/><circle cx="321.40" cy="121.20" r="4"/><circle cx="333.93" cy="121.20" r="4"/><circle cx="346.46" cy="117.06" r="4"/><circle cx="358.99" cy="67.38" r="4"/><circle cx="371.52" cy="117.06" r="4"/><circle cx="384.05" cy="96.36" r="4"/><circle cx="396.58" cy="121.20" r="4"/><circle cx="409.11" cy="121.20" r="4"/><circle cx="421.64" cy="121.20" r="4"/><circle cx="434.17" cy="121.20" r="4"/><circle cx="446.70" cy="104.64" r="4"/><circle cx="459.23" cy="121.20" r="4"/><circle cx="471.76" cy="121.20" r="4"/></g>
<rect x="66.7" y="171.4" width="408.2" height="40.2" fill="#d1d5fd"/>
<path d="M171.5 171.4V211.6" stroke="#b9bce6" stroke-width="1"/>
<text x="174.5" y="208.3" font-size="9.500" fill="#999">12 Aug</text>
<path d="M346.5 171.4V211.6" stroke="#b9bce6" stroke-width="1"/>
<text x="349.5" y="208.3" font-size="9.500" fill="#999">26 Aug</text>
<path d="M70.80 211.20C70.80 211.20 78.32 211.20 83.33 211.20C88.34 211.20 90.85 211.20 95.86 211.20C100.87 211.20 103.38 211.20 108.39 211.20C113.40 211.20 115.91 211.20 120.92 211.20C125.93 211.20 128.44 211.20 133.45 211.20C138.46 211.20 140.97 211.20 145.98 211.20C150.99 211.20 153.50 211.20 158.51 211.20C163.52 211.20 166.03 211.20 171.04 211.20C176.05 211.20 178.56 211.20 183.57 211.20C188.58 211.20 191.09 211.20 196.10 211.20C201.11 211.20 203.62 211.20 208.63 211.20C213.64 211.20 216.15 211.20 221.16 211.20C226.17 211.20 228.68 211.20 233.69 211.20C238.70 211.20 241.21 211.20 246.22 211.20C251.23 211.20 253.74 211.20 258.75 211.20C263.76 211.20 266.27 211.20 271.28 211.20C276.29 211.20 278.80 211.20 283.81 211.20C288.82 211.20 291.33 211.20 296.34 211.20C301.35 211.20 303.86 211.20 308.87 211.20C313.88 211.20 316.39 211.20 321.40 211.20C326.41 211.20 328.92 211.20 333.93 211.20C338.94 211.20 341.45 211.20 346.46 210.51C351.47 209.82 353.98 175.19 358.99 175.19C364.00 175.19 366.51 210.92 371.52 210.92C376.53 210.92 379.04 194.58 384.05 194.58C389.06 194.58 391.57 211.20 396.58 211.20C401.59 211.20 404.10 211.20 409.11 211.20C414.12 211.20 416.63 211.20 421.64 211.20C426.65 211.20 429.16 211.20 434.17 211.20C439.18 211.20 441.69 200.12 446.70 200.12C451.71 200.12 454.22 211.20 459.23 211.20C464.24 211.20 471.76 211.20 471.76 211.20L471.76 211.6L70.80 211.6z" fill="#625ff0" fill-opacity=".06"/>
<path d="M70.80 211.20C70.80 211.20 78.32 211.20 83.33 211.20C88.34 211.20 90.85 211.20 95.86 211.20C100.87 211.20 103.38 211.20 108.39 211.20C113.40 211.20 115.91 211.20 120.92 211.20C125.93 211.20 128.44 211.20 133.45 211.20C138.46 211.20 140.97 211.20 145.98 211.20C150.99 211.20 153.50 211.20 158.51 211.20C163.52 211.20 166.03 211.20 171.04 211.20C176.05 211.20 178.56 211.20 183.57 211.20C188.58 211.20 191.09 211.20 196.10 211.20C201.11 211.20 203.62 211.20 208.63 211.20C213.64 211.20 216.15 211.20 221.16 211.20C226.17 211.20 228.68 211.20 233.69 211.20C238.70 211.20 241.21 211.20 246.22 211.20C251.23 211.20 253.74 211.20 258.75 211.20C263.76 211.20 266.27 211.20 271.28 211.20C276.29 211.20 278.80 211.20 283.81 211.20C288.82 211.20 291.33 211.20 296.34 211.20C301.35 211.20 303.86 211.20 308.87 211.20C313.88 211.20 316.39 211.20 321.40 211.20C326.41 211.20 328.92 211.20 333.93 211.20C338.94 211.20 341.45 211.20 346.46 210.51C351.47 209.82 353.98 175.19 358.99 175.19C364.00 175.19 366.51 210.92 371.52 210.92C376.53 210.92 379.04 194.58 384.05 194.58C389.06 194.58 391.57 211.20 396.58 211.20C401.59 211.20 404.10 211.20 409.11 211.20C414.12 211.20 416.63 211.20 421.64 211.20C426.65 211.20 429.16 211.20 434.17 211.20C439.18 211.20 441.69 200.12 446.70 200.12C451.71 200.12 454.22 211.20 459.23 211.20C464.24 211.20 471.76 211.20 471.76 211.20" fill="none" stroke="#625ff0" stroke-width="1"/>
<path d="M67.2 211.6V171.9H474.4V211.6" fill="none" stroke="#999" stroke-width="1"/>
<rect x="62.7" y="184.5" width="8" height="15" fill="#f2f2f2" stroke="#999" stroke-width="1"/><path d="M65.7 188.5v7M67.7 188.5v7" stroke="#666" stroke-width=".8"/>
<rect x="470.9" y="184.5" width="8" height="15" fill="#f2f2f2" stroke="#999" stroke-width="1"/><path d="M473.9 188.5v7M475.9 188.5v7" stroke="#666" stroke-width=".8"/>
<text x="474.9" y="240.0" text-anchor="end" font-size="8.300" fill="#999">Highcharts.com</text>
</svg></div>
<div class="card" id="c-open" style="left:754px;top:547px;width:494px;height:323px"><div class="hd" style="letter-spacing:-0.1px">Open Times</div><svg class="q" viewBox="0 0 16 16"><circle cx="8" cy="8" r="7" fill="none" stroke="#222" stroke-width="1.400"/><text x="8" y="11.600" text-anchor="middle" font-family="Liberation Sans, sans-serif" font-size="10.500" font-weight="bold" fill="#222">?</text></svg><svg class="abs" style="left:0;top:37px" width="494" height="286" viewBox="0 37 494 286" font-family="Liberation Sans, sans-serif">
<path d="M67.5 200.5H475.0" stroke="#e6e6e6" stroke-width="1"/>
<path d="M67.5 128.5H475.0" stroke="#e6e6e6" stroke-width="1"/>
<path d="M67.5 55.5H475.0" stroke="#e6e6e6" stroke-width="1"/>
<path d="M83.1 273.5V262.0a3 3 0 0 1 3 -3h21a3 3 0 0 1 3 3V273.5z" fill="#625ff0"/>
<text x="96.6" y="298.8" text-anchor="middle" font-size="11" fill="#333">12 am</text>
<path d="M141.3 273.5V102.1a3 3 0 0 1 3 -3h21a3 3 0 0 1 3 3V273.5z" fill="#625ff0"/>
<text x="154.8" y="298.8" text-anchor="middle" font-size="11" fill="#333">4 pm</text>
<path d="M199.5 273.5V262.0a3 3 0 0 1 3 -3h21a3 3 0 0 1 3 3V273.5z" fill="#625ff0"/>
<text x="213.0" y="298.8" text-anchor="middle" font-size="11" fill="#333">6 pm</text>
<path d="M257.8 273.5V262.0a3 3 0 0 1 3 -3h21a3 3 0 0 1 3 3V273.5z" fill="#625ff0"/>
<text x="271.2" y="298.8" text-anchor="middle" font-size="11" fill="#333">7 pm</text>
<path d="M316.0 273.5V160.3a3 3 0 0 1 3 -3h21a3 3 0 0 1 3 3V273.5z" fill="#625ff0"/>
<text x="329.5" y="298.8" text-anchor="middle" font-size="11" fill="#333">8 pm</text>
<path d="M374.2 273.5V262.0a3 3 0 0 1 3 -3h21a3 3 0 0 1 3 3V273.5z" fill="#625ff0"/>
<text x="387.7" y="298.8" text-anchor="middle" font-size="11" fill="#333">9 pm</text>
<path d="M432.4 273.5V262.0a3 3 0 0 1 3 -3h21a3 3 0 0 1 3 3V273.5z" fill="#625ff0"/>
<text x="445.9" y="298.8" text-anchor="middle" font-size="11" fill="#333">11 pm</text>
<path d="M67.5 273.5H475.0" stroke="#333" stroke-width="1"/>
<text x="52.3" y="277.7" text-anchor="end" font-size="11" fill="#333">0</text>
<text x="52.3" y="205.1" text-anchor="end" font-size="11" fill="#333">5</text>
<text x="52.3" y="132.4" text-anchor="end" font-size="11" fill="#333">10</text>
<text x="52.3" y="59.7" text-anchor="end" font-size="11" fill="#333">15</text>
<text transform="translate(30.5 164.0) rotate(-90)" text-anchor="middle" font-size="11" fill="#666">Opens</text>
<text x="475.0" y="310.0" text-anchor="end" font-size="8.300" fill="#999">Highcharts.com</text>
</svg></div>
<div class="card" id="c-feed" style="left:226px;top:904px;width:1022px;height:220px"><div class="hd" style="letter-spacing:0.08px">Activity Feed</div><svg class="q" viewBox="0 0 16 16"><circle cx="8" cy="8" r="7" fill="none" stroke="#222" stroke-width="1.400"/><text x="8" y="11.600" text-anchor="middle" font-family="Liberation Sans, sans-serif" font-size="10.500" font-weight="bold" fill="#222">?</text></svg><div class="th"></div>
<div class="row" style="top:86px"></div><div class="row" style="top:134px"></div>
<span class="h" id="f1" style="left:78.1px;top:56.9px;letter-spacing:-0.29px">Audience Name</span>
<span class="h r" id="f2" style="right:382.8px;top:56.9px;letter-spacing:-0.28px">Opens</span>
<span class="h r" id="f3" style="right:215.2px;top:56.9px;letter-spacing:-0.08px">Date (Latest)</span>
<span class="h r" id="f4" style="right:25.2px;top:56.9px;letter-spacing:-0.4px">Location</span>
<svg class="abs" style="left:28.30000000000001px;top:100.9px" width="14" height="14" viewBox="0 0 14 14"><circle cx="7" cy="7" r="5.900" fill="none" stroke="#555" stroke-width="1.100"/><circle cx="5.200" cy="6.800" r=".7" fill="#555"/><circle cx="8.900" cy="6.800" r=".7" fill="#555"/><path d="M4.200 5.200h2M8 4.800l2-1.300M4.800 9.600h4.600" stroke="#555" stroke-width=".9" fill="none"/></svg>
<span class="t" id="r0a" style="left:77.9px;top:100.5px;letter-spacing:0.028px">retirementPlanningIsAlwaysDoneInABrightWhiteKitchen@stacksofcoins.com</span>
<span class="t r" id="r0o" style="right:382.8px;top:100.5px;letter-spacing:0px">5</span>
<span class="t r" id="r0d" style="right:215.2px;top:100.5px;letter-spacing:-0.13px">2024-09-03 20:39:39</span>
<span class="t r" id="r0l" style="right:25.2px;top:100.5px;letter-spacing:-0.17px">Pemberton, Canada</span>
<svg class="abs" style="left:28.30000000000001px;top:148.9px" width="14" height="14" viewBox="0 0 14 14"><circle cx="7" cy="7" r="5.900" fill="none" stroke="#555" stroke-width="1.100"/><circle cx="5.200" cy="6.800" r=".7" fill="#555"/><circle cx="8.900" cy="6.800" r=".7" fill="#555"/><path d="M4.200 5.200h2M8 4.800l2-1.300M4.800 9.600h4.600" stroke="#555" stroke-width=".9" fill="none"/></svg>
<span class="t" id="r1a" style="left:77.9px;top:148.5px;letter-spacing:0.09px">scott.brownlee@simplebooklet.com</span>
<span class="t r" id="r1o" style="right:382.8px;top:148.5px;letter-spacing:0px">6</span>
<span class="t r" id="r1d" style="right:215.2px;top:148.5px;letter-spacing:-0.13px">2024-09-03 20:02:05</span>
<span class="t r" id="r1l" style="right:25.2px;top:148.5px;letter-spacing:-0.15px">Inverness, United States</span></div>
</body></html>
